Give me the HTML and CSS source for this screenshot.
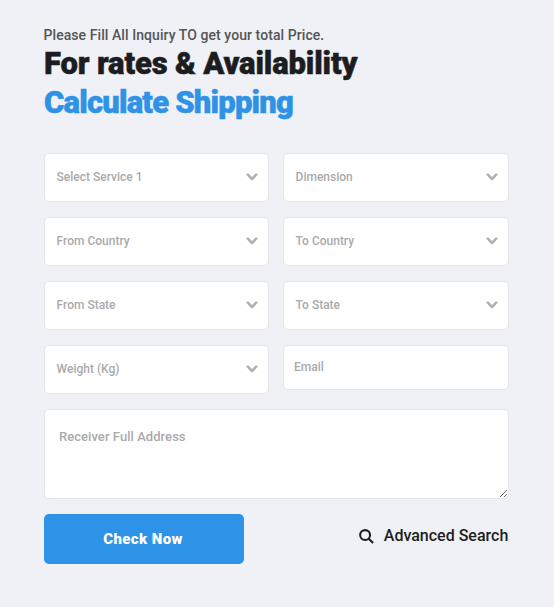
FILE: index.html
```html
<!DOCTYPE html>
<html lang="en">
<head>
<meta charset="utf-8">
<title>Calculate Shipping</title>
<link rel="stylesheet" href="styles.css">
</head>
<body>
<main class="panel">
  <p class="intro">Please Fill All Inquiry TO get your total Price.</p>
  <h2 class="title"><span class="lead">For rates &amp; Availability</span><br><span class="accent">Calculate Shipping</span></h2>
  <form class="form">
    <div class="fields">
      <div class="select">Select Service 1<svg class="chevron" viewBox="0 0 12 8"><path d="M1.8 1.7 6 6 10.2 1.7"/></svg></div>
      <div class="select">Dimension<svg class="chevron" viewBox="0 0 12 8"><path d="M1.8 1.7 6 6 10.2 1.7"/></svg></div>
      <div class="select">From Country<svg class="chevron" viewBox="0 0 12 8"><path d="M1.8 1.7 6 6 10.2 1.7"/></svg></div>
      <div class="select">To Country<svg class="chevron" viewBox="0 0 12 8"><path d="M1.8 1.7 6 6 10.2 1.7"/></svg></div>
      <div class="select">From State<svg class="chevron" viewBox="0 0 12 8"><path d="M1.8 1.7 6 6 10.2 1.7"/></svg></div>
      <div class="select">To State<svg class="chevron" viewBox="0 0 12 8"><path d="M1.8 1.7 6 6 10.2 1.7"/></svg></div>
      <div class="select">Weight (Kg)<svg class="chevron" viewBox="0 0 12 8"><path d="M1.8 1.7 6 6 10.2 1.7"/></svg></div>
      <input class="email" type="email" placeholder="Email">
    </div>
    <textarea class="address" placeholder="Receiver Full Address"></textarea>
    <div class="actions">
      <button class="submit" type="button">Check Now</button>
      <a class="advanced"><svg class="search" viewBox="0 0 16 16"><circle cx="6.5" cy="6.5" r="5.3"/><path d="M10.4 10.4 15 15"/></svg>Advanced Search</a>
    </div>
  </form>
</main>
</body>
</html>
```
FILE: styles.css
```css
* { box-sizing: border-box; }
html { background: #fff; }
body { margin: 0; font-family: Roboto, sans-serif; }
.panel {
  width: 554px;
  height: 607px;
  padding: 25px 45px 0 44px;
  background: #f0f1f7;
}
.intro {
  margin: 0 0 0 -0.5px;
  font-size: 14px;
  line-height: 20px;
  font-weight: 500;
  letter-spacing: 0.07px;
  color: #555;
}
.title {
  margin: -1px 0 0;
  font-size: 31px;
  line-height: 39px;
  font-weight: 900;
  color: #1c1d20;
  white-space: nowrap;
  -webkit-text-stroke: 0.5px currentColor;
}
.lead { letter-spacing: -0.15px; }
.accent { color: #2e92e6; letter-spacing: -0.8px; }
.form { margin-top: 31px; }
.fields {
  display: grid;
  grid-template-columns: 225px 226px;
  column-gap: 14px;
  row-gap: 15px;
  align-items: start;
}
.select, .email, .address {
  background: #fff;
  border: 1px solid #e6e6e8;
  border-radius: 5px;
  color: #aaa;
  font: 500 12px/18px Roboto, sans-serif;
}
.select {
  display: flex;
  align-items: center;
  justify-content: space-between;
  height: 49px;
  padding: 0 10px 2px 11.6px;
}
.chevron {
  width: 12px;
  height: 8px;
  margin-top: 1px;
  fill: none;
  stroke: #b0b0b0;
  stroke-width: 2.6;
  stroke-linecap: round;
}
.email { width: 100%; height: 45px; padding: 0 10px 2px; }
.email::placeholder, .address::placeholder { color: #aaa; opacity: 1; }
.address {
  display: block;
  width: 465px;
  height: 90px;
  margin-top: 15px;
  padding: 18px 14px;
  font-size: 13px;
  letter-spacing: 0.05px;
  resize: vertical;
}
.actions {
  display: flex;
  justify-content: space-between;
  align-items: flex-start;
  margin-top: 15px;
}
.submit {
  width: 200px;
  height: 50px;
  padding: 0 2px 0 0;
  border: 0;
  border-radius: 5px;
  background: #2e92e6;
  color: #fff;
  font: 900 15px/20px Roboto, sans-serif;
  letter-spacing: 0.4px;
}
.advanced {
  display: flex;
  align-items: center;
  gap: 10px;
  margin: 10px 0.7px 0 0;
  font-size: 16px;
  line-height: 24px;
  font-weight: 500;
  color: #1c1d20;
}
.search {
  width: 15px;
  height: 15px;
  fill: none;
  stroke: currentColor;
  stroke-width: 2.2;
}
```
